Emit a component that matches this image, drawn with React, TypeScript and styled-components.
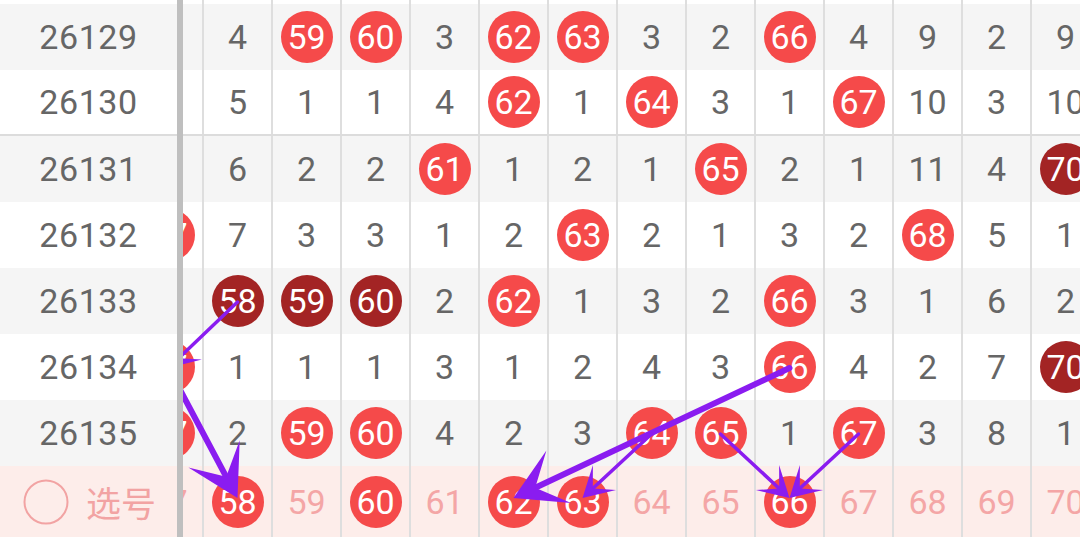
import React from 'react'
import styled, { createGlobalStyle } from 'styled-components'

const GlobalStyle = createGlobalStyle`
  html, body {
    margin: 0;
    padding: 0;
    width: 1080px;
    height: 537px;
    overflow: hidden;
    background: #fff;
    font-family: Roboto, "Noto Sans", "Noto Sans CJK SC", sans-serif;
  }
`

const COL_START = 57
const COL_COUNT = 14
const PANE_LEFT = 183

type Mark = 'B' | 'D' | string

// first column (57) sits mostly under the frozen issue column
const rows: { issue: string; cells: Mark[]; groupEnd?: boolean }[] = [
  { issue: '26129', cells: ['', '4', 'B', 'B', '3', 'B', 'B', '3', '2', 'B', '4', '9', '2', '9'] },
  { issue: '26130', cells: ['', '5', '1', '1', '4', 'B', '1', 'B', '3', '1', 'B', '10', '3', '10'], groupEnd: true },
  { issue: '26131', cells: ['', '6', '2', '2', 'B', '1', '2', '1', 'B', '2', '1', '11', '4', 'D'] },
  { issue: '26132', cells: ['B', '7', '3', '3', '1', '2', 'B', '2', '1', '3', '2', 'B', '5', '1'] },
  { issue: '26133', cells: ['', 'D', 'D', 'D', '2', 'B', '1', '3', '2', 'B', '3', '1', '6', '2'] },
  { issue: '26134', cells: ['B', '1', '1', '1', '3', '1', '2', '4', '3', 'B', '4', '2', '7', 'D'] },
  { issue: '26135', cells: ['B', '2', 'B', 'B', '4', '2', '3', 'B', 'B', '1', 'B', '3', '8', '1'] },
]

// picked numbers on the bottom row
const picked = [58, 60, 62, 63, 66]

type Pt = [number, number]
const arrows: { from: Pt; to: Pt; big?: boolean }[] = [
  { from: [237.5, 302], to: [168.5, 368] },
  { from: [168.5, 368], to: [237.5, 498], big: true },
  { from: [789.5, 368], to: [513.5, 498], big: true },
  { from: [651.5, 434], to: [582.5, 498] },
  { from: [720.5, 434], to: [789.5, 498] },
  { from: [858.5, 434], to: [789.5, 498] },
]

const Board = styled.div`
  display: flex;
  width: 1080px;
  height: 537px;
  overflow: hidden;
`

const Frozen = styled.div`
  width: 177px;
  flex-shrink: 0;
  display: flex;
  flex-direction: column;
  padding-top: 4px;
  box-sizing: border-box;
  background: #fff;
  position: relative;
  z-index: 3;
`

const IssueCell = styled.div<{ $alt: boolean; $groupEnd?: boolean }>`
  height: 66px;
  box-sizing: border-box;
  display: flex;
  align-items: center;
  justify-content: center;
  font-size: 34px;
  letter-spacing: 0.6px;
  color: #666;
  background: ${p => (p.$alt ? '#f5f5f5' : '#fff')};
  border-bottom: ${p => (p.$groupEnd ? '2px solid #dcdcdc' : 'none')};
`

const PickCell = styled.div`
  flex: 1;
  display: flex;
  align-items: center;
  justify-content: center;
  gap: 17px;
  background: #fdedea;
  color: #f2a3a3;
  font-size: 35px;
  font-family: "Noto Sans CJK SC", "Noto Sans", sans-serif;
  padding-left: 2px;
`

const Divider = styled.div`
  width: 6px;
  flex-shrink: 0;
  background: #bfbfbf;
`

const Pane = styled.div`
  flex: 1;
  position: relative;
  overflow: hidden;
  display: flex;
  flex-direction: column;
`

const Track = styled.div<{ $h?: number; $bg: string; $groupEnd?: boolean }>`
  display: flex;
  margin-left: -48px;
  flex-shrink: 0;
  height: ${p => (p.$h ? `${p.$h}px` : '66px')};
  box-sizing: border-box;
  background: ${p => p.$bg};
  border-bottom: ${p => (p.$groupEnd ? '2px solid #dcdcdc' : 'none')};
`

const BottomTrack = styled(Track)`
  flex: 1;
  height: auto;
`

const Cell = styled.div<{ $pink?: boolean }>`
  width: 69px;
  flex-shrink: 0;
  box-sizing: border-box;
  border-right: 2px solid #dedede;
  display: flex;
  align-items: center;
  justify-content: center;
  font-size: 34px;
  color: ${p => (p.$pink ? '#f4a6a6' : '#666')};
`

const Ball = styled.div<{ $dark?: boolean }>`
  width: 52px;
  height: 52px;
  border-radius: 50%;
  background: ${p => (p.$dark ? '#a32424' : '#f54a4a')};
  color: #fff;
  display: flex;
  align-items: center;
  justify-content: center;
  font-size: 34px;
  line-height: 1;
`

const Overlay = styled.svg`
  position: absolute;
  top: 0;
  left: -${PANE_LEFT}px;
  width: 1080px;
  height: 537px;
  pointer-events: none;
  z-index: 2;
`

const Arrow = ({ from, to, big }: { from: Pt; to: Pt; big?: boolean }) => {
  const dx = to[0] - from[0]
  const dy = to[1] - from[1]
  const len = Math.hypot(dx, dy)
  const ux = dx / len
  const uy = dy / len
  const nx = -uy
  const ny = ux
  const L = big ? 50 : 30
  const W = big ? 29 : 17
  const N = big ? 24 : 14
  const bx = to[0] - L * ux
  const by = to[1] - L * uy
  const notch: Pt = [to[0] - N * ux, to[1] - N * uy]
  const pts = [
    to,
    [bx + W * nx, by + W * ny],
    notch,
    [bx - W * nx, by - W * ny],
  ]
    .map(p => `${p[0].toFixed(1)},${p[1].toFixed(1)}`)
    .join(' ')
  return (
    <g>
      <line
        x1={from[0]}
        y1={from[1]}
        x2={notch[0]}
        y2={notch[1]}
        stroke="#8a1cf0"
        strokeWidth={big ? 6 : 3.5}
        strokeLinecap="round"
      />
      <polygon points={pts} fill="#8a1cf0" />
    </g>
  )
}

const cols = Array.from({ length: COL_COUNT }, (_, i) => COL_START + i)

export default function App() {
  return (
    <>
      <GlobalStyle />
      <Board>
        <Frozen>
          {rows.map((r, i) => (
            <IssueCell key={r.issue} $alt={i % 2 === 0} $groupEnd={r.groupEnd}>
              {r.issue}
            </IssueCell>
          ))}
          <PickCell>
            <svg width="46" height="46" viewBox="0 0 46 46">
              <circle cx="23" cy="23" r="21.5" fill="none" stroke="#f2a3a3" strokeWidth="2" />
            </svg>
            <span>选号</span>
          </PickCell>
        </Frozen>
        <Divider />
        <Pane>
          <Track $h={4} $bg="#fff">
            {cols.map(c => (
              <Cell key={c} />
            ))}
          </Track>
          {rows.map((r, i) => (
            <Track key={r.issue} $bg={i % 2 === 0 ? '#f5f5f5' : '#fff'} $groupEnd={r.groupEnd}>
              {r.cells.map((m, j) => (
                <Cell key={j}>
                  {m === 'B' || m === 'D' ? <Ball $dark={m === 'D'}>{cols[j]}</Ball> : m}
                </Cell>
              ))}
            </Track>
          ))}
          <BottomTrack $bg="#fdedea">
            {cols.map(c => (
              <Cell key={c} $pink>
                {picked.includes(c) ? <Ball>{c}</Ball> : c}
              </Cell>
            ))}
          </BottomTrack>
          <Overlay viewBox="0 0 1080 537">
            {arrows.map((a, i) => (
              <Arrow key={i} {...a} />
            ))}
          </Overlay>
        </Pane>
      </Board>
    </>
  )
}
